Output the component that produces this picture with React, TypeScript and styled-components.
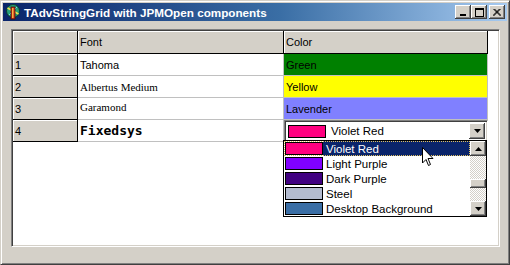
import React from "react";
import styled, { createGlobalStyle } from "styled-components";

const GlobalStyle = createGlobalStyle`
  html, body { margin: 0; padding: 0; background: #d4d0c8; }
  * { box-sizing: border-box; }
`;

const Window = styled.div`
  width: 510px;
  height: 265px;
  background: #d4d0c8;
  border-top: 1px solid #d4d0c8;
  border-left: 1px solid #d4d0c8;
  border-right: 1px solid #404040;
  border-bottom: 1px solid #404040;
  box-shadow: inset 1px 1px #fff, inset -1px -1px #808080;
  padding: 2px;
  display: flex;
  flex-direction: column;
  font-family: "Liberation Sans", Arial, sans-serif;
`;

const TitleBar = styled.div`
  height: 18px;
  display: flex;
  align-items: center;
  padding: 0 2px 0 2px;
  background: linear-gradient(to right, #0a246a 0%, #3a6ea5 55%, #a6caf0 100%);
  color: #fff;
`;

const IconSlot = styled.span`
  display: flex;
  width: 16px;
  min-width: 16px;
  height: 16px;
`;

const TitleText = styled.span`
  font-family: "Liberation Sans", Arial, sans-serif;
  font-weight: bold;
  font-size: 11.7px;
  margin-left: 3px;
  flex: 1;
  min-width: 0;
  white-space: nowrap;
`;

const TitleButtons = styled.div`
  display: flex;
  align-items: center;
  flex: none;
`;

const CapButton = styled.div<{ $gap?: number }>`
  width: 16px;
  height: 14px;
  margin-left: ${(p) => p.$gap ?? 0}px;
  background: #d4d0c8;
  box-shadow: inset -1px -1px #404040, inset 1px 1px #fff, inset -2px -2px #808080;
  display: flex;
  align-items: center;
  justify-content: center;
`;

const Client = styled.div`
  flex: 1;
  padding: 8px 7px 15px 8px;
  display: flex;
`;

const GridBox = styled.div`
  position: relative;
  flex: 1;
  background: #fff;
  border-top: 1px solid #808080;
  border-left: 1px solid #808080;
  border-right: 1px solid #fff;
  border-bottom: 1px solid #fff;
  box-shadow: inset 1px 1px #404040, inset -1px -1px #d4d0c8;
  padding: 1px;
`;

const Table = styled.div`
  display: grid;
  grid-template-columns: 65px 206px 204px;
  grid-template-rows: 23px repeat(4, 22px);
`;

const Cell = styled.div<{ $kind: "fixed" | "normal"; $bg?: string; $font?: string }>`
  display: flex;
  align-items: center;
  padding-left: 2px;
  font-size: 11px;
  color: #000;
  white-space: nowrap;
  overflow: hidden;
  background: ${(p) => (p.$kind === "fixed" ? "#d4d0c8" : p.$bg ?? "#fff")};
  border-right: 1px solid ${(p) => (p.$kind === "fixed" ? "#000" : "#c0c0c0")};
  border-bottom: 1px solid ${(p) => (p.$kind === "fixed" ? "#000" : "#c0c0c0")};
  box-shadow: ${(p) => (p.$kind === "fixed" ? "inset 1px 1px #fff" : "none")};
  font-family: ${(p) => p.$font ?? '"Liberation Sans", Arial, sans-serif'};
`;

const FontSample = styled.span<{ $size: number; $weight?: string; $shift?: number }>`
  font-size: ${(p) => p.$size}px;
  font-weight: ${(p) => p.$weight ?? "normal"};
  position: relative;
  top: ${(p) => p.$shift ?? 0}px;
`;

const Combo = styled.div`
  display: flex;
  align-items: center;
  background: #fff;
  border-top: 1px solid #808080;
  border-left: 1px solid #808080;
  border-right: 1px solid #fff;
  border-bottom: 1px solid #fff;
  box-shadow: inset 1px 1px #404040, inset -1px -1px #d4d0c8;
  padding: 2px 2px 2px 3px;
  font-size: 11.5px;
`;

const Swatch = styled.span<{ $color: string }>`
  display: inline-block;
  width: 38px;
  height: 13px;
  background: ${(p) => p.$color};
  border: 1px solid #000;
  flex: none;
`;

const ComboText = styled.span`
  margin-left: 5px;
  flex: 1;
`;

const ArrowButton = styled.div<{ $h?: number }>`
  width: 16px;
  height: ${(p) => p.$h ?? 16}px;
  background: #d4d0c8;
  box-shadow: inset -1px -1px #404040, inset 1px 1px #fff, inset -2px -2px #808080;
  display: flex;
  align-items: center;
  justify-content: center;
  flex: none;
`;

const DropList = styled.div`
  position: absolute;
  left: 271px;
  top: 110px;
  width: 204px;
  height: 77px;
  background: #fff;
  border: 1px solid #000;
  display: flex;
`;

const Items = styled.div`
  flex: 1;
  display: flex;
  flex-direction: column;
`;

const Item = styled.div<{ $selected?: boolean }>`
  height: 15px;
  display: flex;
  align-items: center;
  padding-left: 1px;
  font-size: 11.5px;
  color: ${(p) => (p.$selected ? "#fff" : "#000")};
  outline: ${(p) => (p.$selected ? "1px dotted #e0c060" : "none")};
  outline-offset: -1px;
`;

const ItemLabel = styled.span<{ $selected?: boolean }>`
  flex: 1;
  height: 100%;
  display: flex;
  align-items: center;
  padding-left: 3px;
  background: ${(p) => (p.$selected ? "#0a246a" : "transparent")};
`;

const ScrollBar = styled.div`
  width: 16px;
  display: flex;
  flex-direction: column;
  background-color: #fff;
  background-image: repeating-conic-gradient(#d4d0c8 0 25%, #fff 0 50%);
  background-size: 2px 2px;
`;

const Track = styled.div`
  flex: 1;
  display: flex;
  flex-direction: column;
  justify-content: flex-start;
  padding-top: 23px;
`;

const Thumb = styled.div`
  height: 9px;
  background: #d4d0c8;
  box-shadow: inset -1px -1px #404040, inset 1px 1px #fff, inset -2px -2px #808080;
`;

const Cursor = styled.svg`
  position: absolute;
  left: 410px;
  top: 117px;
`;

const Tri = ({ up }: { up?: boolean }) => (
  <svg width="7" height="4" viewBox="0 0 7 4">
    <polygon points={up ? "3.5,0 7,4 0,4" : "0,0 7,0 3.5,4"} fill="#000" />
  </svg>
);

const colors = [
  { name: "Violet Red", color: "#ff0080" },
  { name: "Light Purple", color: "#8000ff" },
  { name: "Dark Purple", color: "#400080" },
  { name: "Steel", color: "#b4bcd0" },
  { name: "Desktop Background", color: "#3a6ea5" },
];

const App = () => {
  return (
    <>
      <GlobalStyle />
      <Window>
        <TitleBar>
          <IconSlot>
            <svg width="16" height="16" viewBox="0 0 16 16">
              <circle cx="8" cy="7" r="6.5" fill="#28a078" stroke="#0c3c30" strokeWidth="1" />
              <path d="M2.5 4 L13.5 10" stroke="#f0e050" strokeWidth="1.5" />
              <path d="M4 11 L12 3" stroke="#80d0f0" strokeWidth="1" />
              <rect x="6" y="3" width="4" height="12" fill="#d03020" stroke="#401000" strokeWidth="0.8" />
              <rect x="7" y="4" width="1.5" height="10" fill="#f8b040" />
            </svg>
          </IconSlot>
          <TitleText>TAdvStringGrid with JPMOpen components</TitleText>
          <TitleButtons>
            <CapButton>
              <svg width="8" height="8" viewBox="0 0 8 8">
                <rect x="1" y="6" width="6" height="2" fill="#000" />
              </svg>
            </CapButton>
            <CapButton>
              <svg width="9" height="9" viewBox="0 0 9 9">
                <rect x="0.5" y="0.5" width="8" height="8" fill="none" stroke="#000" />
                <rect x="0" y="0" width="9" height="2" fill="#000" />
              </svg>
            </CapButton>
            <CapButton $gap={2}>
              <svg width="8" height="7" viewBox="0 0 8 7">
                <path d="M0.5 0 L7.5 7 M7.5 0 L0.5 7 M1.5 0 L8 6.5 M6.5 0 L0 6.5" stroke="#000" strokeWidth="1" />
              </svg>
            </CapButton>
          </TitleButtons>
        </TitleBar>
        <Client>
          <GridBox>
            <Table>
              <Cell $kind="fixed" />
              <Cell $kind="fixed">Font</Cell>
              <Cell $kind="fixed">Color</Cell>

              <Cell $kind="fixed">1</Cell>
              <Cell $kind="normal">
                <FontSample $size={11}>Tahoma</FontSample>
              </Cell>
              <Cell $kind="normal" $bg="#008000">Green</Cell>

              <Cell $kind="fixed">2</Cell>
              <Cell $kind="normal" $font='"Liberation Serif", "Times New Roman", serif'>
                <FontSample $size={11}>Albertus Medium</FontSample>
              </Cell>
              <Cell $kind="normal" $bg="#ffff00">Yellow</Cell>

              <Cell $kind="fixed">3</Cell>
              <Cell $kind="normal" $font='"Liberation Serif", "Times New Roman", serif'>
                <FontSample $size={11} $shift={-2}>Garamond</FontSample>
              </Cell>
              <Cell $kind="normal" $bg="#8080ff">Lavender</Cell>

              <Cell $kind="fixed">4</Cell>
              <Cell $kind="normal" $font='"DejaVu Sans Mono", "Liberation Mono", monospace'>
                <FontSample $size={13} $weight="bold">Fixedsys</FontSample>
              </Cell>
              <Combo>
                <Swatch $color="#ff0080" />
                <ComboText>Violet Red</ComboText>
                <ArrowButton>
                  <Tri />
                </ArrowButton>
              </Combo>
            </Table>

            <DropList>
              <Items>
                {colors.map((c, i) => (
                  <Item key={c.name} $selected={i === 0}>
                    <Swatch $color={c.color} />
                    <ItemLabel $selected={i === 0}>{c.name}</ItemLabel>
                  </Item>
                ))}
              </Items>
              <ScrollBar>
                <ArrowButton $h={15}>
                  <Tri up />
                </ArrowButton>
                <Track>
                  <Thumb />
                </Track>
                <ArrowButton $h={15}>
                  <Tri />
                </ArrowButton>
              </ScrollBar>
            </DropList>

            <Cursor width="12" height="20" viewBox="0 0 12 20">
              <path
                d="M0.5 0.5 L0.5 16 L4 12.5 L6.5 18.5 L8.5 17.5 L6 11.5 L11 11.5 Z"
                fill="#fff"
                stroke="#000"
                strokeWidth="1"
              />
            </Cursor>
          </GridBox>
        </Client>
      </Window>
    </>
  );
};

export default App;
